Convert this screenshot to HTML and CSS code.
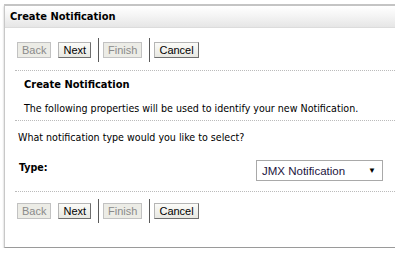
FILE: index.html
```html
<!doctype html>
<html>
<head>
	<title>Create Notification</title>
	<meta name="viewport" content="width=device-width, initial-scale=1">
	<link rel="stylesheet" href="styles.css">
</head>
<body>
	<div class="panel">
		<header class="panel-title">Create Notification</header>
		<div class="panel-body">
			<div class="toolbar">
				<button class="btn" disabled>Back</button>
				<button class="btn">Next</button>
				<span class="sep"></span>
				<button class="btn" disabled>Finish</button>
				<span class="sep"></span>
				<button class="btn">Cancel</button>
			</div>
			<section class="intro">
				<h2>Create Notification</h2>
				<p>The following properties will be used to identify your new Notification.</p>
			</section>
			<p class="question">What notification type would you like to select?</p>
			<div class="field">
				<label for="type">Type:</label>
				<div class="select" id="type">
					<span>JMX Notification</span>
					<span class="arrow">&#9660;</span>
				</div>
			</div>
			<div class="toolbar bottom">
				<button class="btn" disabled>Back</button>
				<button class="btn">Next</button>
				<span class="sep"></span>
				<button class="btn" disabled>Finish</button>
				<span class="sep"></span>
				<button class="btn">Cancel</button>
			</div>
		</div>
	</div>
</body>
</html>
```

FILE: styles.css
```css
* {
	box-sizing: border-box;
}
body {
	margin: 0;
	background: white;
	font-family: 'DejaVu Sans Condensed', 'DejaVu Sans', sans-serif;
	font-size: 10.6px;
	color: #000;
}
.panel {
	margin: 4px 0 0 4px;
	height: 244px;
	border-top: 2px solid #c4c4c4;
	border-left: 1px solid #c8c8c8;
	border-bottom: 1px solid #9a9a9a;
	box-shadow: 0px 2px 2px rgba(0, 0, 0, 0.25);
}
.panel-title {
	height: 22px;
	padding: 4px 0 0 5px;
	background: linear-gradient(#ffffff, #f6f6f6 40%, #e6e6e6);
	border-bottom: 1px solid #dcdcdc;
	font-weight: bold;
	font-size: 11px;
}
.panel-body {
	padding-left: 10px;
}
.toolbar {
	display: flex;
	align-items: center;
	height: 43px;
	padding-left: 2px;
	padding-top: 1px;
	border-bottom: 1px dotted #bbb;
}
.toolbar.bottom {
	border-bottom: none;
	height: 38px;
	padding-top: 0;
}
.btn {
	height: 16px;
	padding: 0 4px;
	margin: 0 7px 0 0;
	font-family: 'Liberation Sans', Arial, sans-serif;
	font-size: 11px;
	color: #000;
	background: linear-gradient(#fbfbf8, #e8e8e2);
	border: 1px solid;
	border-color: #b5b5b5 #6e6e6e #6e6e6e #b5b5b5;
	border-radius: 0;
}
.btn:disabled {
	color: #8a8a8a;
	background: #ececE6;
	border-color: #c2c2c2;
}
.sep {
	width: 1px;
	height: 24px;
	margin-right: 4px;
	background: #5a5a5a;
}
.intro {
	padding: 7px 0 0 9px;
	border-bottom: 1px dotted #bbb;
}
.intro h2 {
	margin: 0 0 11px 0;
	font-size: 11px;
	font-weight: bold;
}
.intro p {
	margin: 0 0 6px 0;
}
.question {
	margin: 10px 0 0 3px;
}
.field {
	display: flex;
	justify-content: space-between;
	align-items: center;
	margin-top: 17px;
	padding: 0 12px 10px 4px;
	border-bottom: 1px dotted #bbb;
}
.field label {
	font-weight: bold;
	margin-top: -8px;
}
.select {
	display: flex;
	justify-content: space-between;
	align-items: center;
	width: 127px;
	height: 21px;
	padding: 0 6px 0 5px;
	border: 1px solid #a9a9a9;
	font-family: 'Liberation Sans', Arial, sans-serif;
	font-size: 11.5px;
	color: #1c1440;
}
.select .arrow {
	font-size: 8px;
	color: #000;
}
```
